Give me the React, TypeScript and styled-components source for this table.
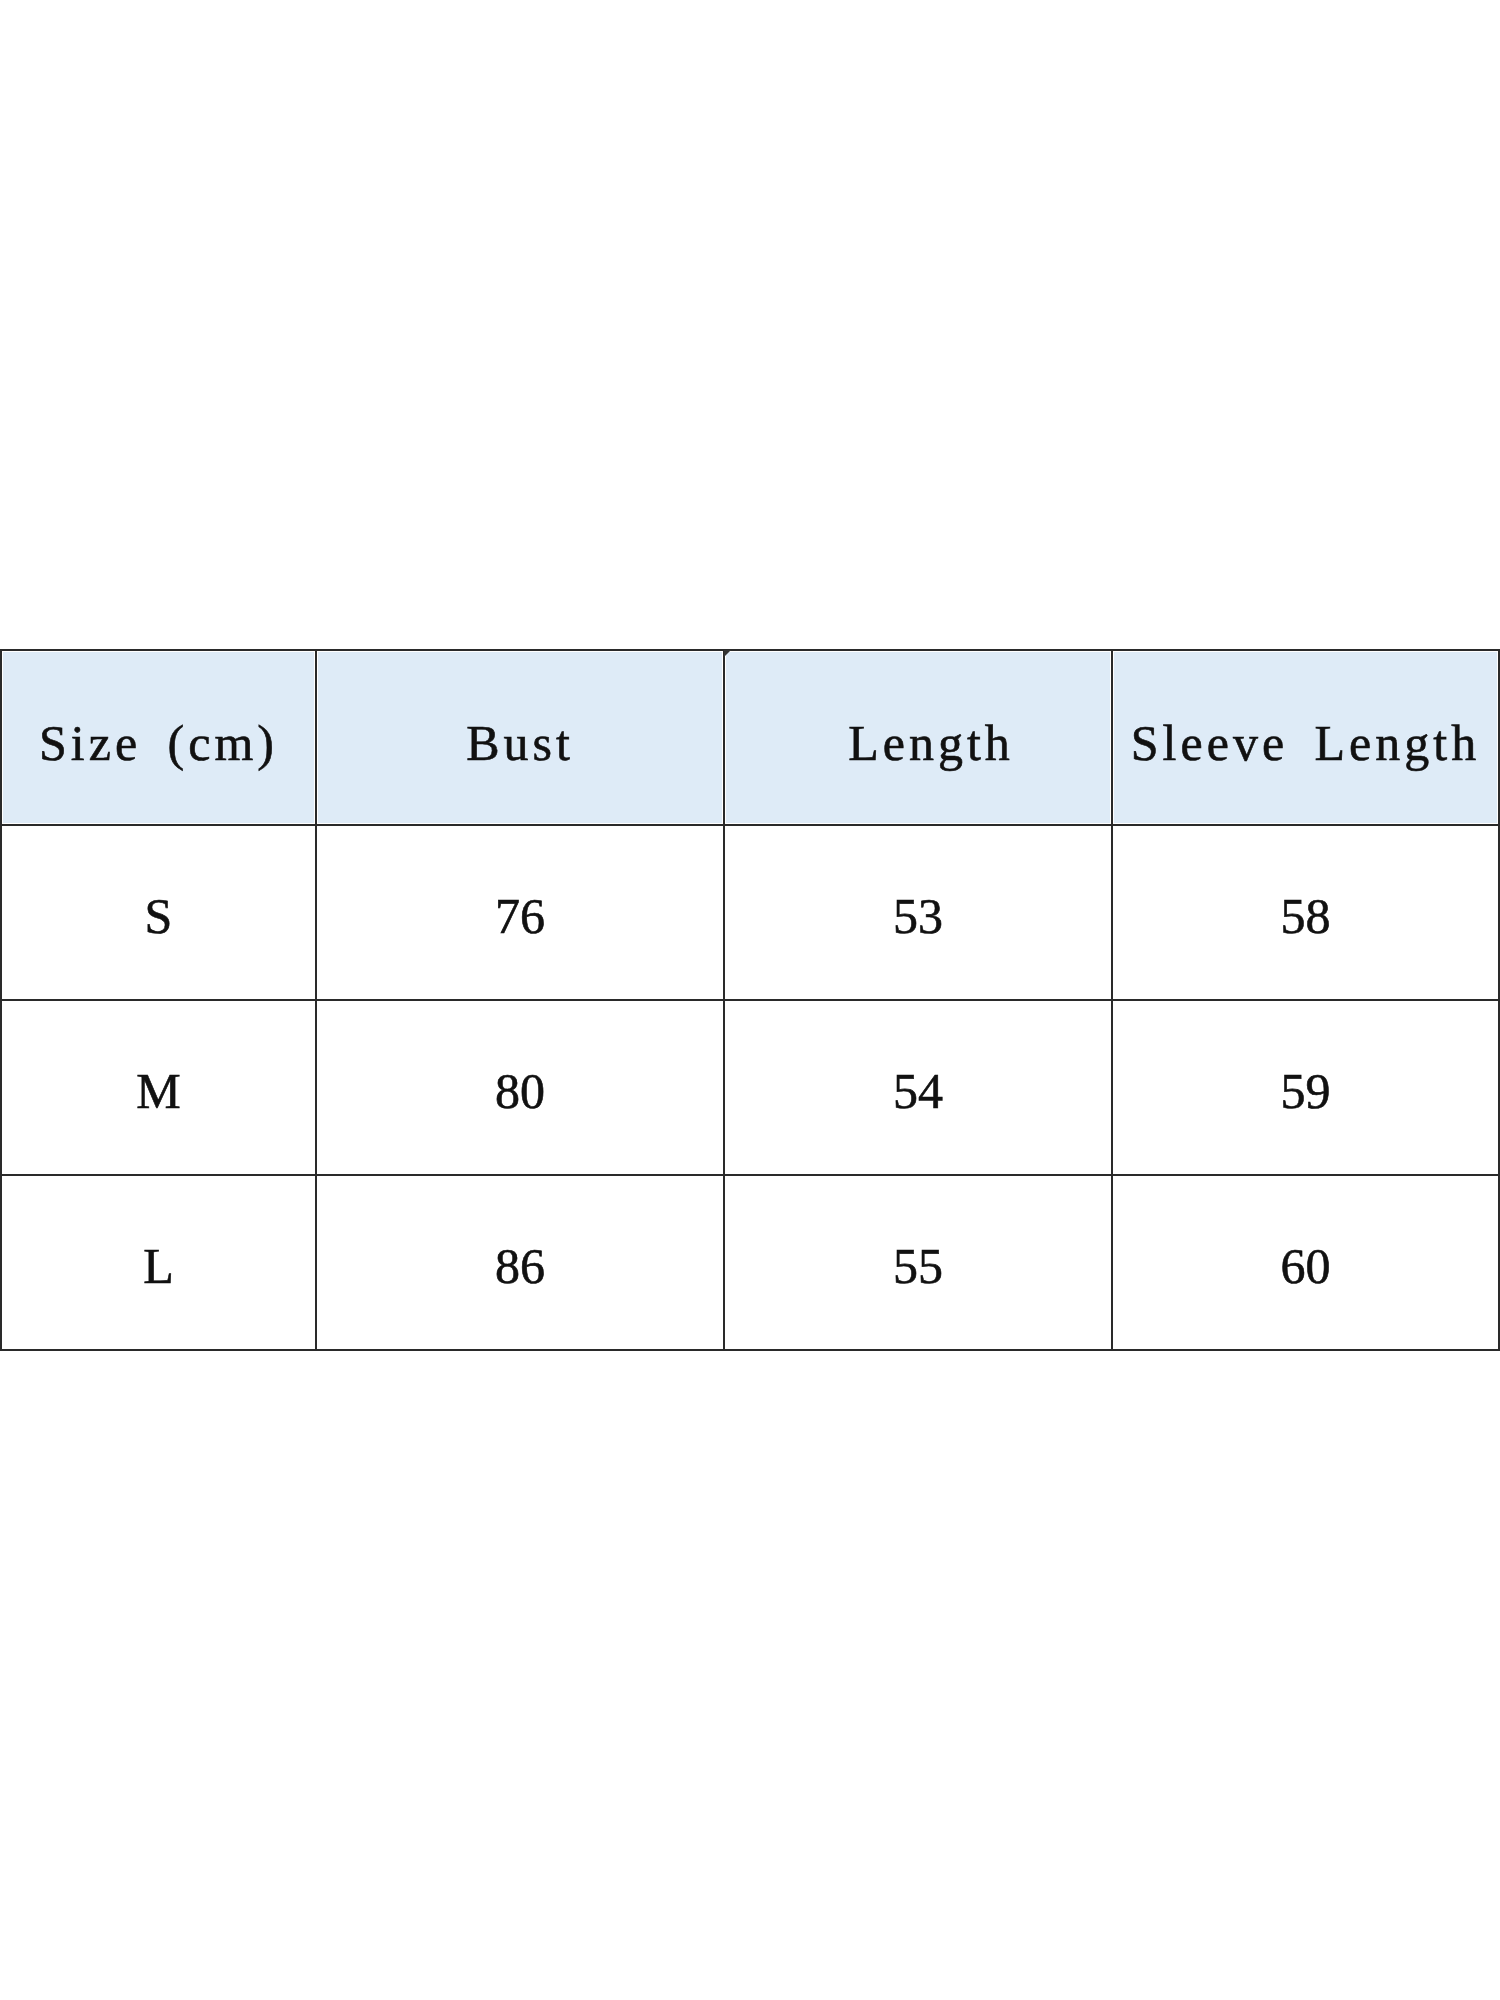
import React from "react";
import styled, { createGlobalStyle } from "styled-components";

const GlobalStyle = createGlobalStyle`
  html, body {
    margin: 0;
    padding: 0;
    background: #ffffff;
  }
`;

const Page = styled.div`
  min-height: 2000px;
  display: flex;
  align-items: center;
  justify-content: flex-start;
`;

const SizeTable = styled.table`
  width: 1498px;
  table-layout: fixed;
  border-collapse: collapse;
  font-family: "Liberation Serif", "Times New Roman", serif;
  color: #111;
  border: 2px solid #2a2a2a;
`;

const HeadCell = styled.th<{ $shift?: number }>`
  position: relative;
  height: 163px;
  padding: 10px 0 0 ${(p) => p.$shift || 0}px;
  background: #deebf7;
  box-shadow: inset 0 0 0 1px #ffffff;
  border: 2px solid #2a2a2a;
  font-size: 50px;
  font-weight: normal;
  letter-spacing: 4px;
  word-spacing: 10px;
  -webkit-text-stroke: 0.6px #111;
  text-align: center;
  vertical-align: middle;
  white-space: nowrap;
`;

const Marker = styled.span`
  position: absolute;
  left: -1px;
  top: -1px;
  width: 0;
  height: 0;
  border-top: 7px solid #333;
  border-right: 7px solid transparent;
`;

const Cell = styled.td`
  height: 167px;
  padding: 6px 0 0;
  border: 2px solid #2a2a2a;
  font-size: 50px;
  -webkit-text-stroke: 0.6px #111;
  text-align: center;
  vertical-align: middle;
`;

const rows = [
  ["S", "76", "53", "58"],
  ["M", "80", "54", "59"],
  ["L", "86", "55", "60"],
];

function App() {
  return (
    <Page>
      <GlobalStyle />
      <SizeTable>
        <colgroup>
          <col style={{ width: 315 }} />
          <col style={{ width: 408 }} />
          <col style={{ width: 388 }} />
          <col style={{ width: 387 }} />
        </colgroup>
        <thead>
          <tr>
            <HeadCell>Size (cm)</HeadCell>
            <HeadCell>Bust</HeadCell>
            <HeadCell $shift={26}>
              <Marker />
              Length
            </HeadCell>
            <HeadCell>Sleeve Length</HeadCell>
          </tr>
        </thead>
        <tbody>
          {rows.map((r) => (
            <tr key={r[0]}>
              {r.map((v, i) => (
                <Cell key={i}>{v}</Cell>
              ))}
            </tr>
          ))}
        </tbody>
      </SizeTable>
    </Page>
  );
}

export default App;
